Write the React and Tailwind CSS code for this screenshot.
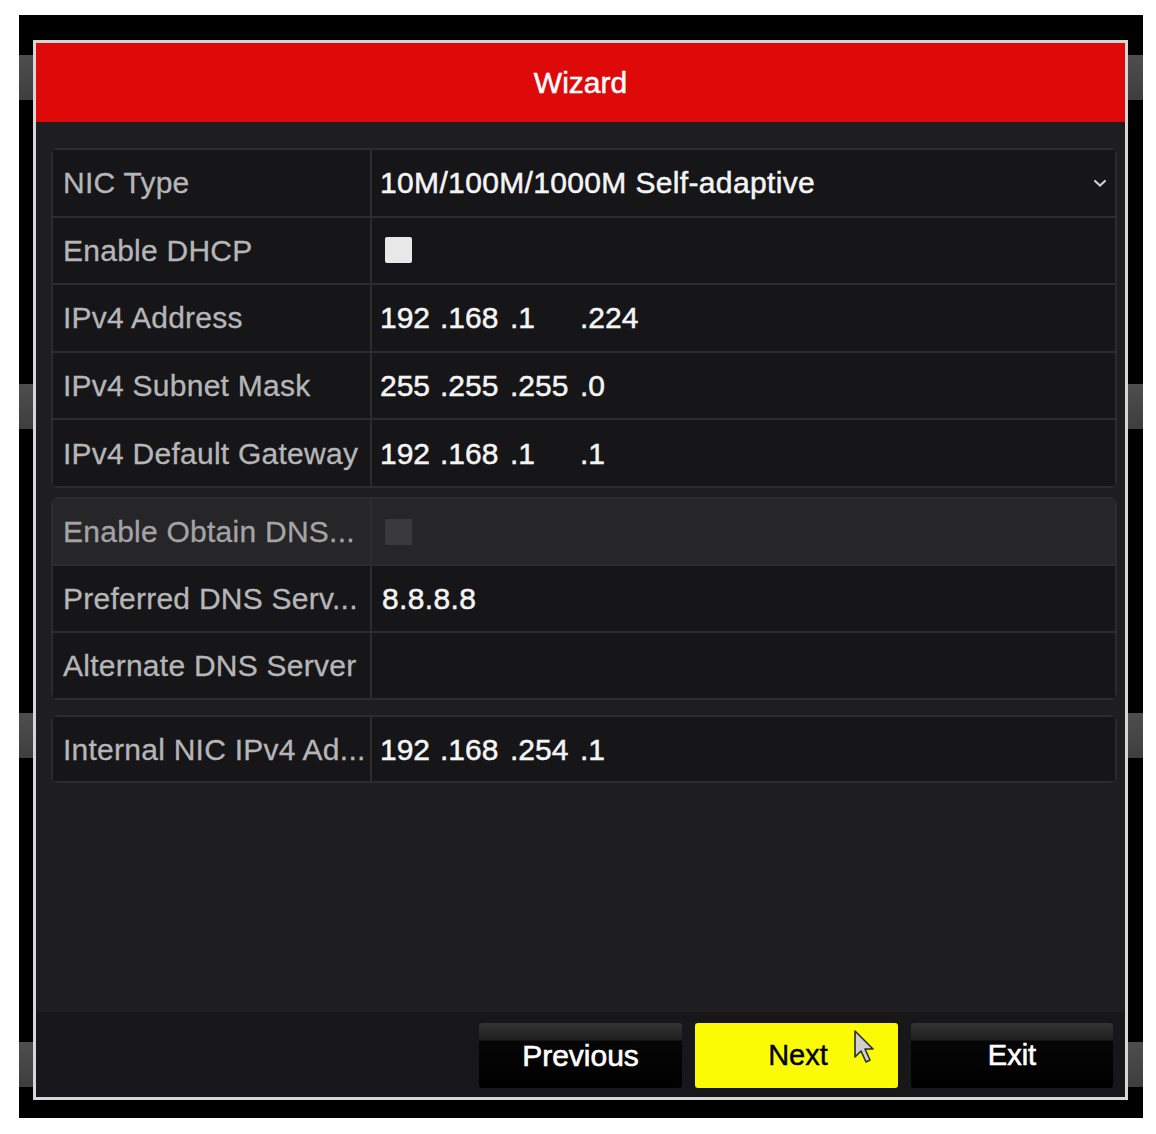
import React from "react";

const font = { fontFamily: '"Liberation Sans", Arial, sans-serif' };

function Strips() {
  return (
    <div className="flex flex-col pt-[40px] gap-[284px]">
      {[0, 1, 2, 3].map((i) => (
        <div key={i} className="h-[45px] bg-[linear-gradient(to_bottom,#4e4e4e,#3e3e3e)]" />
      ))}
    </div>
  );
}

function Ip({ parts }) {
  return (
    <div className="flex tracking-normal">
      {parts.map((p, i) => (
        <span key={i} className={i === 0 ? "w-[60px]" : "w-[70px]"}>
          {i === 0 ? p : "." + p}
        </span>
      ))}
    </div>
  );
}

function Row({ label, children, disabled }) {
  const cell = disabled ? "bg-[#262628]" : "bg-[#161618]";
  return (
    <div className="flex-1 grid grid-cols-[317px_1fr] gap-[2px] min-h-0">
      <div
        className={`${cell} flex items-center pl-[10px] text-[30px] tracking-[0.25px] [-webkit-text-stroke:0.3px_currentColor] ${
          disabled ? "text-[#a4a4a6]" : "text-[#b6b6b8]"
        } whitespace-nowrap overflow-hidden`}
      >
        {label}
      </div>
      <div className={`${cell} flex items-center pl-[8px] pr-[10px] text-[30px] text-[#f4f4f4] tracking-[0.35px] [-webkit-text-stroke:0.5px_currentColor] whitespace-nowrap`}>
        {children}
      </div>
    </div>
  );
}

function Group({ h, children }) {
  return (
    <div className={`${h} flex flex-col gap-[2px] p-[2px] bg-[#2c2c2e] rounded-[7px] overflow-hidden`}>
      {children}
    </div>
  );
}

function Cursor() {
  return (
    <svg className="absolute left-[158px] top-[6px]" width="24" height="38" viewBox="0 0 24 38">
      <path
        d="M2 2 L2 28 L8 22 L13 33 L17 31 L12 20 L20 20 Z"
        fill="#cfcfcf"
        stroke="#2a2a2a"
        strokeWidth="1.6"
        strokeLinejoin="round"
      />
    </svg>
  );
}

const darkBtn =
  "h-[65px] rounded-[3px] bg-[linear-gradient(to_bottom,#343434_0%,#1f1f1f_26%,#060606_28%,#000000_100%)] text-white flex items-center justify-center [-webkit-text-stroke:0.6px_currentColor]";

export default function App() {
  return (
    <div className="w-[1156px] h-[1134px] bg-white pt-[15px] pl-[19px]" style={font}>
      <div className="w-[1124px] h-[1103px] bg-black flex">
        <div className="w-[14px]">
          <Strips />
        </div>
        <div className="mt-[25px] w-[1095px] h-[1060px] border-[3px] border-[#d6d6d6] flex flex-col">
          <div className="h-[79px] bg-[#de0a0a] flex items-center justify-center text-white text-[30px] [-webkit-text-stroke:0.5px_currentColor]">
            Wizard
          </div>
          <div className="flex-1 bg-[#1e1e20] pt-[26px] pl-[15px] pr-[8px] flex flex-col">
            <Group h="h-[340px]">
              <Row label="NIC Type">
                <div className="flex-1 flex items-center justify-between">
                  <span>10M/100M/1000M Self-adaptive</span>
                  <svg width="14" height="9" viewBox="0 0 14 9" className="mt-[2px] mr-[-2px]">
                    <path d="M2 2 L7 6.5 L12 2" fill="none" stroke="#cfcfcf" strokeWidth="2.2" strokeLinecap="round" />
                  </svg>
                </div>
              </Row>
              <Row label="Enable DHCP">
                <div className="ml-[5px] w-[27px] h-[26px] bg-[#e8e8e8] rounded-[2px]" />
              </Row>
              <Row label="IPv4 Address">
                <Ip parts={["192", "168", "1", "224"]} />
              </Row>
              <Row label="IPv4 Subnet Mask">
                <Ip parts={["255", "255", "255", "0"]} />
              </Row>
              <Row label="IPv4 Default Gateway">
                <Ip parts={["192", "168", "1", "1"]} />
              </Row>
            </Group>
            <div className="mt-[9px]">
              <Group h="h-[203px]">
                <Row label="Enable Obtain DNS..." disabled>
                  <div className="ml-[5px] w-[27px] h-[26px] bg-[#3a3a3c] rounded-[2px]" />
                </Row>
                <Row label="Preferred DNS Serv...">
                  <span className="pl-[2px]">8.8.8.8</span>
                </Row>
                <Row label="Alternate DNS Server"></Row>
              </Group>
            </div>
            <div className="mt-[15px]">
              <Group h="h-[68px]">
                <Row label="Internal NIC IPv4 Ad...">
                  <Ip parts={["192", "168", "254", "1"]} />
                </Row>
              </Group>
            </div>
          </div>
          <div className="h-[85px] bg-[#171719] flex justify-end items-start pt-[11px] pr-[12px] gap-[13px]">
            <button className={`${darkBtn} w-[203px] text-[30px]`}>Previous</button>
            <button className="relative w-[203px] h-[65px] rounded-[3px] bg-[#fbfb05] text-black text-[29px] flex items-center justify-center [-webkit-text-stroke:0.4px_currentColor]">
              <span className="ml-[3px]">Next</span>
              <Cursor />
            </button>
            <button className={`${darkBtn} w-[202px] text-[29px]`}>Exit</button>
          </div>
        </div>
        <div className="w-[15px]">
          <Strips />
        </div>
      </div>
    </div>
  );
}
